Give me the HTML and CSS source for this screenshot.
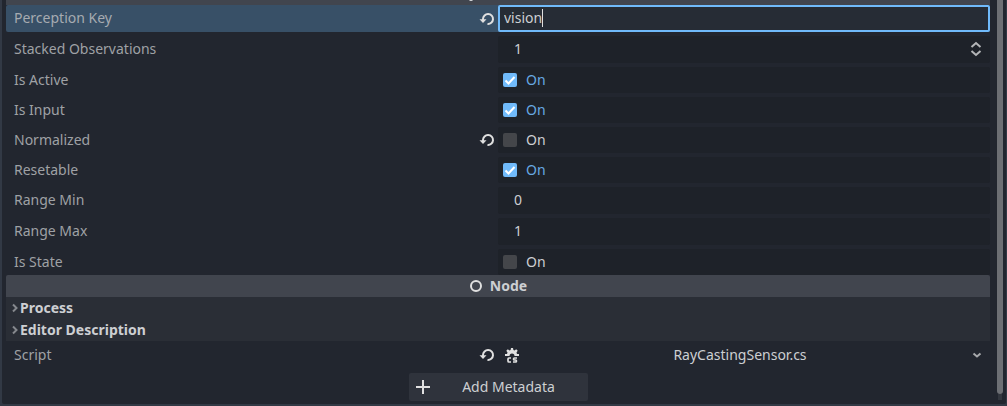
FILE: index.html
```html
<!DOCTYPE html>
<html lang="en">
<head>
<meta charset="utf-8">
<title>Inspector</title>
<link rel="stylesheet" href="styles.css">
</head>
<body>
<svg class="defs" aria-hidden="true">
  <symbol id="revert" viewBox="0 0 16 16"><path d="M4 9.5V8a5 5 0 1 1 4.500 5" fill="none" stroke="currentColor" stroke-width="2"/><path d="M.5 8.200h7L4 12z" fill="currentColor"/></symbol>
  <symbol id="chevron" viewBox="0 0 8 10"><path d="M2 1.500 5.500 5 2 8.500" fill="none" stroke="currentColor" stroke-width="2"/></symbol>
</svg>
<main class="inspector">
  <form class="properties">
    <div class="previous"><svg width="4" height="1" viewBox="0 0 4 1"><path d="M0 0h4L3 1H1z" fill="currentColor"/></svg></div>
    <div class="rows">
      <div class="row selected">
        <label for="key">Perception Key</label>
        <button type="button" class="revert" aria-label="Revert Perception Key"><svg><use href="#revert"/></svg></button>
        <div class="field editing"><input id="key" type="text" value="vision"><span class="caret"></span></div>
      </div>
      <div class="row">
        <label for="stacked">Stacked Observations</label>
        <div class="field number"><input id="stacked" type="text" inputmode="numeric" value="1">
          <button type="button" class="spin" aria-label="Change value"><svg width="12" height="16" viewBox="0 0 12 16"><path d="M1.500 6 6 2l4.500 4M1.500 10 6 14l4.500-4" fill="none" stroke="currentColor" stroke-width="2"/></svg></button>
        </div>
      </div>
      <div class="row check">
        <label for="active">Is Active</label>
        <label class="field"><input id="active" type="checkbox" checked><span>On</span></label>
      </div>
      <div class="row check">
        <label for="input">Is Input</label>
        <label class="field"><input id="input" type="checkbox" checked><span>On</span></label>
      </div>
      <div class="row check">
        <label for="normalized">Normalized</label>
        <button type="button" class="revert" aria-label="Revert Normalized"><svg><use href="#revert"/></svg></button>
        <label class="field"><input id="normalized" type="checkbox"><span>On</span></label>
      </div>
      <div class="row check">
        <label for="resetable">Resetable</label>
        <label class="field"><input id="resetable" type="checkbox" checked><span>On</span></label>
      </div>
      <div class="row">
        <label for="min">Range Min</label>
        <div class="field number"><input id="min" type="text" inputmode="numeric" value="0"></div>
      </div>
      <div class="row">
        <label for="max">Range Max</label>
        <div class="field number"><input id="max" type="text" inputmode="numeric" value="1"></div>
      </div>
      <div class="row check">
        <label for="state">Is State</label>
        <label class="field"><input id="state" type="checkbox"><span>On</span></label>
      </div>
    </div>
    <h2 class="category"><svg width="14" height="14" viewBox="0 0 14 14"><circle cx="7" cy="7" r="5" fill="none" stroke="currentColor" stroke-width="2"/></svg>Node</h2>
    <button type="button" class="section"><svg width="8" height="10"><use href="#chevron"/></svg>Process</button>
    <button type="button" class="section"><svg width="8" height="10"><use href="#chevron"/></svg>Editor Description</button>
    <div class="row script">
      <label for="script">Script</label>
      <button type="button" class="revert" aria-label="Revert Script"><svg><use href="#revert"/></svg></button>
      <div class="resource">
        <svg class="gear" width="16" height="16" viewBox="0 0 16 16"><path d="M7 1h2l.4 2 1.100.500 1.700-1.200 1.500 1.500L12.500 5.500 13 7h2v2H10.500a2.500 2.500 0 0 0-5 0H1V7h2l.5-1.500L2.300 3.800l1.500-1.500 1.700 1.200L6.600 3z" fill="currentColor"/><path d="M7 11H5q-1 0-1 1v2q0 1 1 1h2M13 11h-2.500q-1 0-1 1t1 1H11.500q1 0 1 1t-1 1H9" fill="none" stroke="currentColor" stroke-width="1.700"/></svg>
        <select id="script"><option>RayCastingSensor.cs</option></select>
        <svg class="arrow" width="10" height="8" viewBox="0 0 10 8"><path d="M1.500 2.500 5 5.500l3.500-3" fill="none" stroke="currentColor" stroke-width="2"/></svg>
      </div>
    </div>
    <button type="button" class="metadata"><svg width="14" height="14" viewBox="0 0 14 14"><path d="M7 0v14M0 7h14" stroke="currentColor" stroke-width="2"/></svg><span>Add Metadata</span></button>
  </form>
  <div class="scrollbar"><div class="thumb"></div><div class="track"></div></div>
</main>
</body>
</html>
```
FILE: styles.css
```css
* { box-sizing: border-box; }
body {
  margin: 0;
  background: #323945;
  color: #cdcfd2;
  font: 14px/20px "Noto Sans", sans-serif;
}
button, input, select {
  margin: 0;
  padding: 0;
  border: 0;
  background: none;
  color: inherit;
  font: inherit;
}
.defs { position: absolute; width: 0; height: 0; }
.inspector {
  display: flex;
  gap: 7px;
  margin: 0 1px 2px 2px;
  padding: 0 3px 0 4px;
  background: #22262f;
  border-radius: 0 0 2px 2px;
}
.properties { flex: 1; display: flex; flex-direction: column; min-width: 0; padding-bottom: 3px; }
.previous {
  display: flex;
  height: 5px;
  padding-left: 463px;
  background: #41454e;
}
.rows { display: flex; flex-direction: column; gap: 4px; }
.row {
  display: grid;
  grid-template-columns: minmax(0, 1fr) 19px 50%;
  align-items: center;
  height: 27px;
}
.row > label:first-child { padding: 0 0 1px 8px; color: #9fa1a5; }
.row.check { height: 26px; }
.row.check > label:first-child, .row.script > label:first-child { padding-bottom: 0; }
.row.selected { background: #385067; border-radius: 2px; }
.row.selected > label:first-child { color: #a6abb1; }
.revert { display: flex; color: #e0e0e0; }
.revert svg { width: 16px; height: 16px; }
.field {
  grid-column: 3;
  display: flex;
  align-items: center;
  height: 100%;
  min-width: 0;
  background: #1e2229;
  border-radius: 2px;
}
.editing { border: 2px solid #70bafa; background: #262c35; padding: 0 0 1px 4px; }
.editing input { field-sizing: content; outline: 0; }
.caret { width: 1px; height: 18px; background: #dfdfdf; }
.number { padding: 0 8px 1px 16px; }
.number input { flex: 1; min-width: 0; }
.spin { display: flex; color: #b4b6b8; }
.check .field { gap: 9px; padding-left: 5px; }
.field input[type="checkbox"] {
  appearance: none;
  width: 14px;
  height: 14px;
  border-radius: 2px;
  background: #44464a;
}
.field input[type="checkbox"]:checked {
  background: #70bafa url("data:image/svg+xml,%3Csvg xmlns='http://www.w3.org/2000/svg' viewBox='0 0 14 14'%3E%3Cpath d='M2.500 7.500l3 3 6-6.500' fill='none' stroke='white' stroke-width='2'/%3E%3C/svg%3E");
}
.field input:checked + span { color: #67a9e2; }
.category {
  display: flex;
  align-items: center;
  justify-content: center;
  gap: 7px;
  height: 22px;
  margin: 0;
  border-radius: 2px 2px 0 0;
  background: #41454e;
  font-size: 14px;
}
.category svg { color: #e0e0e0; }
.section {
  display: flex;
  align-items: center;
  gap: 1px;
  height: 22px;
  padding-left: 5px;
  background: #2a2e36;
  font-weight: 700;
}
.section svg { color: #85888d; }
.row.script { height: 28px; }
.resource { display: flex; align-items: center; gap: 4px; padding: 0 8px 0 6px; }
.gear { color: #e0e0e0; }
.resource select {
  flex: 1;
  min-width: 0;
  padding-right: 12px;
  appearance: none;
  text-align: center;
  text-align-last: center;
}
.arrow { color: #a7a9ac; }
.metadata {
  display: flex;
  align-items: center;
  align-self: center;
  width: 179px;
  height: 28px;
  margin-top: 4px;
  padding: 0 8px 0 7px;
  border-radius: 2px;
  background: #2f333c;
}
.metadata svg { color: #e0e0e0; }
.metadata span { flex: 1; text-align: center; padding-left: 8px; }
.scrollbar { display: flex; flex-direction: column; align-items: center; width: 6px; padding-bottom: 4px; }
.thumb { flex: 1; width: 100%; background: #6d6f74; border-radius: 0 0 3px 3px; }
.track { width: 4px; height: 6px; background: #33373f; }
```
